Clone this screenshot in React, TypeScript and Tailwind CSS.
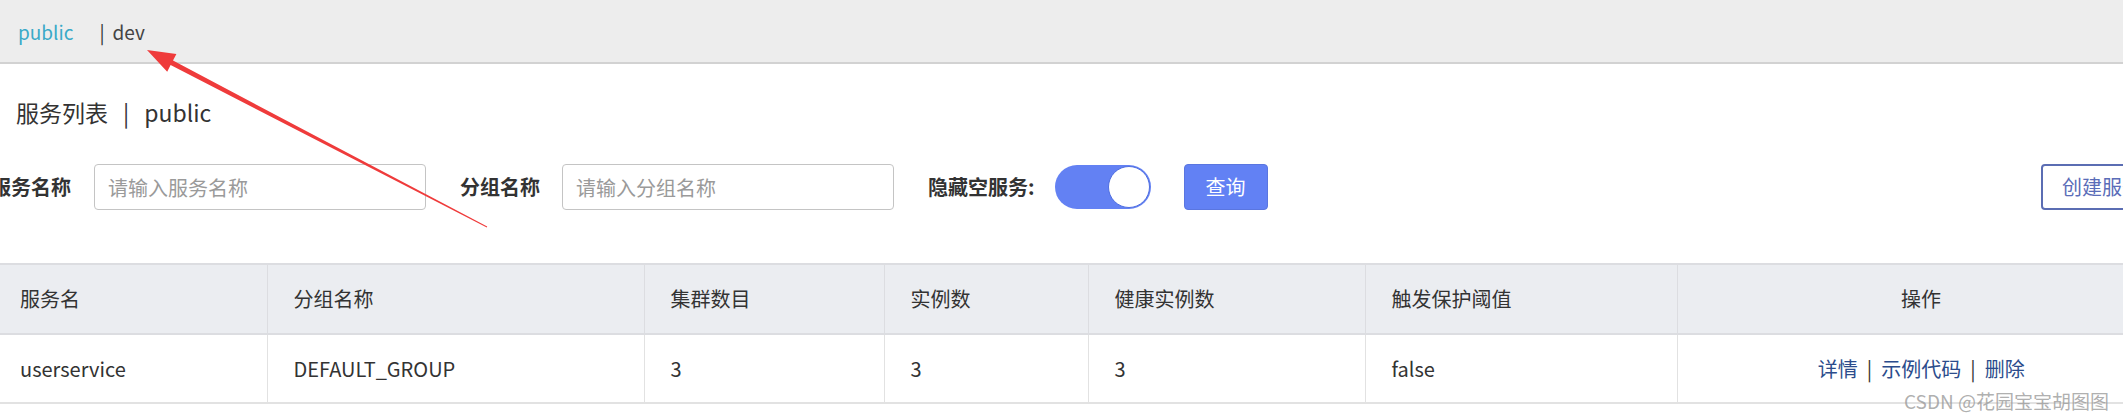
import React from 'react';

const font = "font-['Noto_Sans_CJK_SC','Noto_Sans',sans-serif]";

const columns = [
  { title: '服务名', w: 'w-[273px]' },
  { title: '分组名称', w: 'w-[377px]' },
  { title: '集群数目', w: 'w-[240px]' },
  { title: '实例数', w: 'w-[204px]' },
  { title: '健康实例数', w: 'w-[277px]' },
  { title: '触发保护阈值', w: 'w-[312px]' },
  { title: '操作', w: 'w-[488px]' },
];

const rows = [
  { name: 'userservice', group: 'DEFAULT_GROUP', clusters: '3', instances: '3', healthy: '3', threshold: 'false' },
];

const Arrow = () => (
  <svg className="absolute left-0 top-0 pointer-events-none" width="520" height="240" viewBox="0 0 520 240">
    {/* tapered red arrow pointing at the namespace bar */}
    <polygon
      points="147,50 176.4,54 173,60.6 487.2,226.6 486.8,227.4 170.6,65.1 167.2,71.8"
      fill="#ef3b3b"
    />
  </svg>
);

export default function App() {
  return (
    <div className={`relative w-[2123px] h-[420px] overflow-hidden bg-white text-[#333] ${font}`}>
      {/* NAMESPACE BAR */}
      <div className="h-[64px] bg-[#ededed] border-b-2 border-[#d2d2d2] flex items-center pt-[3px] text-[19px]">
        <span className="ml-[18px] text-[#3aa9c8]">public</span>
        <span className="ml-[26px] text-[#333]">|</span>
        <span className="ml-[8px] text-[#444]">dev</span>
      </div>

      {/* TITLE */}
      <div className="mt-[31px] h-[34px] leading-[34px] text-[23px] flex items-center pl-[16px]">
        <span>服务列表</span>
        <span className="ml-[15px]">|</span>
        <span className="ml-[15px]">public</span>
      </div>

      {/* FILTERS */}
      <div className="mt-[35px] h-[46px] flex items-center text-[20px]">
        <span className="ml-[-9px] font-bold w-[80px] shrink-0">服务名称</span>
        <input
          className="ml-[23px] w-[332px] h-[46px] border border-[#c4c4c4] rounded-[4px] px-[13px] text-[20px] placeholder:text-[#9a9a9a] outline-none"
          placeholder="请输入服务名称"
        />
        <span className="ml-[34px] font-bold">分组名称</span>
        <input
          className="ml-[22px] w-[332px] h-[46px] border border-[#c4c4c4] rounded-[4px] px-[13px] text-[20px] placeholder:text-[#9a9a9a] outline-none"
          placeholder="请输入分组名称"
        />
        <span className="ml-[34px] font-bold">隐藏空服务:</span>
        <div className="ml-[20px] w-[96px] h-[44px] rounded-full bg-[#6381f3] flex items-center justify-end pr-[1px]">
          <div className="w-[42px] h-[42px] rounded-full bg-white border border-[#4f6ee0]" />
        </div>
        <button className="ml-[33px] w-[84px] h-[46px] rounded-[4px] bg-[#6281f4] border border-[#5a76e0] text-white text-[20px]">
          查询
        </button>
        <button className="ml-auto mr-[-40px] w-[122px] h-[46px] rounded-[4px] border-2 border-[#5b6db3] text-[#5a6cb8] text-[20px] shrink-0">
          创建服务
        </button>
      </div>

      {/* TABLE */}
      <table className="mt-[53px] ml-[-6px] w-[2171px] table-fixed border-collapse text-[20px]">
        <thead>
          <tr className="h-[70px] bg-[#ebedf1] border-t-2 border-b-2 border-[#dcdde1]">
            {columns.map((c, i) => (
              <th
                key={c.title}
                className={`${c.w} font-normal px-[26px] border-r border-[#dcdde1] ${i === columns.length - 1 ? 'text-center' : 'text-left'}`}
              >
                {c.title}
              </th>
            ))}
          </tr>
        </thead>
        <tbody>
          {rows.map((r) => (
            <tr key={r.name} className="h-[69px] border-b-2 border-[#e2e2e2]">
              <td className="px-[26px] border-r border-[#e2e2e2]">{r.name}</td>
              <td className="px-[26px] border-r border-[#e2e2e2]">{r.group}</td>
              <td className="px-[26px] border-r border-[#e2e2e2]">{r.clusters}</td>
              <td className="px-[26px] border-r border-[#e2e2e2]">{r.instances}</td>
              <td className="px-[26px] border-r border-[#e2e2e2]">{r.healthy}</td>
              <td className="px-[26px] border-r border-[#e2e2e2]">{r.threshold}</td>
              <td className="px-[26px] text-center text-[#2b4c8c]">
                <span>详情</span>
                <span className="mx-[9px] text-[#333]">|</span>
                <span>示例代码</span>
                <span className="mx-[9px] text-[#333]">|</span>
                <span>删除</span>
              </td>
            </tr>
          ))}
        </tbody>
      </table>

      <Arrow />

      {/* watermark */}
      <div className="absolute right-[14px] top-[388px] text-[19px] text-[#9a9a9a]/80 leading-[26px]">
        CSDN @花园宝宝胡图图
      </div>
    </div>
  );
}
